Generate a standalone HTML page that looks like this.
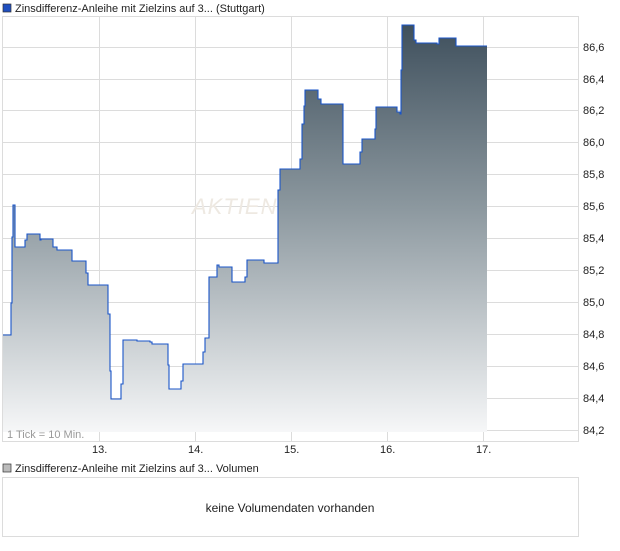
<!DOCTYPE html>
<html><head><meta charset="utf-8"><style>
body{margin:0;background:#fff;width:620px;height:546px;overflow:hidden;font-family:"Liberation Sans",sans-serif;}
</style></head><body>
<svg width="620" height="546" xmlns="http://www.w3.org/2000/svg" font-family="Liberation Sans, sans-serif">
<defs><linearGradient id="g" x1="0" y1="25" x2="0" y2="432" gradientUnits="userSpaceOnUse">
<stop offset="0" stop-color="#3f505d"/><stop offset="0.45" stop-color="#8c989f"/><stop offset="1" stop-color="#f6f7f8"/></linearGradient></defs>
<rect x="3" y="4" width="8" height="8" fill="#1f4fbf" stroke="#333" stroke-width="0.7"/>
<text x="15" y="12" font-size="11" fill="#222">Zinsdifferenz-Anleihe mit Zielzins auf 3... (Stuttgart)</text>
<g stroke="#dcdcdc" stroke-width="1" fill="none">
<rect x="2.5" y="16.5" width="576" height="425"/>
<path d="M3 47.5H578M3 79.5H578M3 110.5H578M3 142.5H578M3 174.5H578M3 206.5H578M3 238.5H578M3 270.5H578M3 302.5H578M3 334.5H578M3 366.5H578M3 398.5H578M3 430.5H578"/>
<path d="M99.5 17V441M195.5 17V441M291.5 17V441M387.5 17V441M483.5 17V441"/>
</g>
<text x="192" y="214" font-size="22" font-style="italic" fill="#eee9e2" letter-spacing="1">AKTIEN</text>
<path id="p" d="M3 335H11V303H12V237H13V205H15V247H25V240H27V234H40V240H41V239H53V247H57V250H72V261H86V273H88V285H108V314H110V371H111V399H121V384H123V340H137V341H150V342H152V344H168V365H169V389H181V381H183V364H203V352H205V338H209V277H217V265H219V267H232V282H245V277H247V260H264V263H278V190H280V169H300V159H302V124H304V106H305V90H318V99H321V104H343V164H360V152H362V139H375V129H376V107H397V112H400V114H401V70H402V25H414V40H416V43H437V44H439V38H456V46H487" fill="none"/>
<path d="M3 335H11V303H12V237H13V205H15V247H25V240H27V234H40V240H41V239H53V247H57V250H72V261H86V273H88V285H108V314H110V371H111V399H121V384H123V340H137V341H150V342H152V344H168V365H169V389H181V381H183V364H203V352H205V338H209V277H217V265H219V267H232V282H245V277H247V260H264V263H278V190H280V169H300V159H302V124H304V106H305V90H318V99H321V104H343V164H360V152H362V139H375V129H376V107H397V112H400V114H401V70H402V25H414V40H416V43H437V44H439V38H456V46H487V432H3Z" fill="url(#g)"/>
<use href="#p" stroke="#1a55c8" stroke-width="1.1"/>
<g font-size="11" fill="#222">
<text x="583" y="51">86,6</text><text x="583" y="83">86,4</text><text x="583" y="114">86,2</text><text x="583" y="146">86,0</text><text x="583" y="178">85,8</text><text x="583" y="210">85,6</text><text x="583" y="242">85,4</text><text x="583" y="274">85,2</text><text x="583" y="306">85,0</text><text x="583" y="338">84,8</text><text x="583" y="370">84,6</text><text x="583" y="402">84,4</text><text x="583" y="434">84,2</text>
<text x="92" y="453">13.</text><text x="188" y="453">14.</text><text x="284" y="453">15.</text><text x="380" y="453">16.</text><text x="476" y="453">17.</text>
</g>
<text x="7" y="438" font-size="11" fill="#999">1 Tick = 10 Min.</text>
<rect x="3" y="464" width="8" height="8" fill="#bbb" stroke="#333" stroke-width="0.7"/>
<text x="15" y="472" font-size="11" fill="#222">Zinsdifferenz-Anleihe mit Zielzins auf 3... Volumen</text>
<rect x="2.5" y="477.5" width="576" height="59" fill="none" stroke="#dcdcdc"/>
<text x="290" y="512" font-size="12" fill="#222" text-anchor="middle">keine Volumendaten vorhanden</text>
</svg>
</body></html>
